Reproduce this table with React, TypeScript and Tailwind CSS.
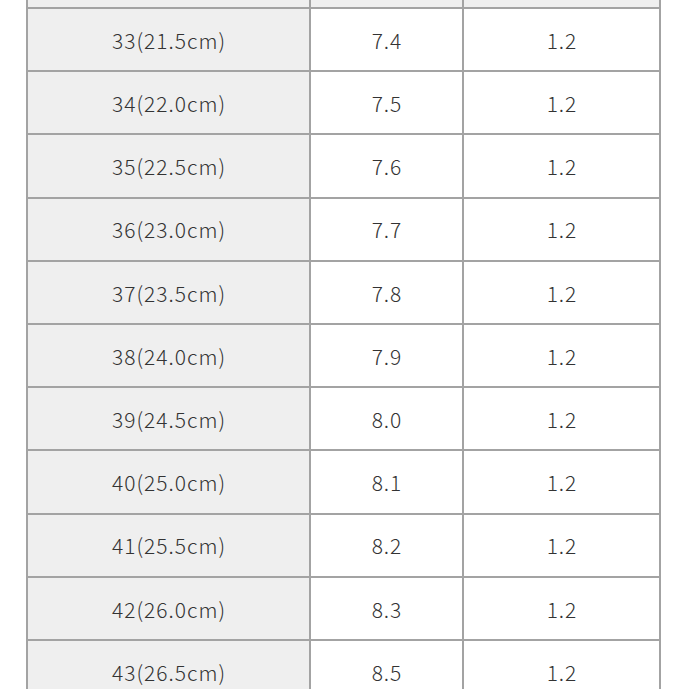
import React from "react";

const rows: [string, string, string][] = [
  ["33(21.5cm)", "7.4", "1.2"],
  ["34(22.0cm)", "7.5", "1.2"],
  ["35(22.5cm)", "7.6", "1.2"],
  ["36(23.0cm)", "7.7", "1.2"],
  ["37(23.5cm)", "7.8", "1.2"],
  ["38(24.0cm)", "7.9", "1.2"],
  ["39(24.5cm)", "8.0", "1.2"],
  ["40(25.0cm)", "8.1", "1.2"],
  ["41(25.5cm)", "8.2", "1.2"],
  ["42(26.0cm)", "8.3", "1.2"],
  ["43(26.5cm)", "8.5", "1.2"],
];

export default function App() {
  return (
    <div
      className="h-[689px] w-[689px] overflow-hidden bg-white"
      style={{ fontFamily: '"Noto Sans CJK JP", "Noto Sans", sans-serif' }}
    >
      <div className="ml-[26px] mt-[-54.2px] w-[635px] border-l-2 border-[#a3a3a3] text-[21px] font-light tracking-[1px] text-[#333333]">
        <div className="grid h-[63.2px] grid-cols-[283px_153px_197px] bg-[#efefef]">
          <div className="border-b-2 border-r-2 border-[#a3a3a3]" />
          <div className="border-b-2 border-r-2 border-[#a3a3a3]" />
          <div className="border-b-2 border-r-2 border-[#a3a3a3]" />
        </div>
        {rows.map(([a, b, c]) => (
          <div key={a} className="grid h-[63.2px] grid-cols-[283px_153px_197px]">
            <div className="flex items-center justify-center border-b-2 border-r-2 border-[#a3a3a3] bg-[#efefef] pl-[1px] pt-[2px]">
              {a}
            </div>
            <div className="flex items-center justify-center border-b-2 border-r-2 border-[#a3a3a3] bg-white pl-[1px] pt-[2px]">
              {b}
            </div>
            <div className="flex items-center justify-center border-b-2 border-r-2 border-[#a3a3a3] bg-white pl-[1px] pt-[2px]">
              {c}
            </div>
          </div>
        ))}
      </div>
    </div>
  );
}
